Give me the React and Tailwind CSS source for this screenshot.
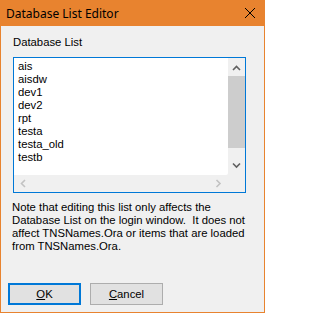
const items = ['ais', 'aisdw', 'dev1', 'dev2', 'rpt', 'testa', 'testa_old', 'testb'];

function Chevron({ dir, className }) {
  const d = {
    up: 'M1 5 L4.5 1.5 L8 5',
    down: 'M1 1.5 L4.5 5 L8 1.5',
    left: 'M5 1 L1.5 4.5 L5 8',
    right: 'M1.5 1 L5 4.5 L1.5 8',
  }[dir];
  const box = dir === 'up' || dir === 'down' ? '0 0 9 7' : '0 0 7 9';
  return (
    <svg viewBox={box} className={className} fill="none" stroke="currentColor" strokeWidth="1.6">
      <path d={d} />
    </svg>
  );
}

export default function App() {
  return (
    <div className="w-[265px] h-[313px] flex flex-col bg-[#f0f0f0] border-x border-b border-[#e8832f] text-black text-[11.3px] leading-[13px]" style={{ fontFamily: '"Liberation Sans", Arial, sans-serif' }}>
      {/* title bar */}
      <div className="h-[26px] shrink-0 bg-[#e8832f] -mx-px flex items-center justify-between pl-[6px] pr-[10px]">
        <span className="text-[12px] font-['Noto_Sans',sans-serif]">Database List Editor</span>
        <svg viewBox="0 0 10 10" className="w-[10px] h-[10px]" stroke="black" strokeWidth="1">
          <path d="M0 0 L10 10 M10 0 L0 10" />
        </svg>
      </div>

      <div className="flex flex-col pl-[12px] pr-[18px]">
        <div className="mt-[10px]">Database List</div>

        {/* list box */}
        <div className="mt-[8px] h-[136px] w-[233px] border border-[#0078d7] bg-[#f0f0f0] grid grid-cols-[1fr_17px] grid-rows-[1fr_17px]">
          <div className="bg-white pt-[2px] pl-[4px] rounded-br-[2px]">
            {items.map(i => (
              <div key={i}>{i}</div>
            ))}
          </div>
          <div className="flex flex-col items-center">
            <Chevron dir="up" className="w-[9px] h-[7px] mt-[7px] text-[#606060]" />
            <div className="w-[17px] h-[72px] mt-[4px] bg-[#cdcdcd]" />
            <div className="flex-1" />
            <Chevron dir="down" className="w-[9px] h-[7px] mb-[6px] text-[#606060]" />
          </div>
          <div className="flex items-center justify-between px-[6px]">
            <Chevron dir="left" className="w-[7px] h-[9px] text-[#c2c2c2]" />
            <Chevron dir="right" className="w-[7px] h-[9px] text-[#c2c2c2]" />
          </div>
          <div />
        </div>

        <p className="mt-[8px] -ml-[1px]">
          Note that editing this list only affects the Database List on the login window.&nbsp; It does not affect TNSNames.Ora or items that are loaded from TNSNames.Ora.
        </p>
      </div>

      <div className="flex gap-[9px] mt-auto mb-[7px] pl-[7px]">
        <button className="w-[73px] h-[22px] bg-[#e1e1e1] border-2 border-[#0078d7]">
          <span className="underline">O</span>K
        </button>
        <button className="w-[73px] h-[22px] bg-[#e1e1e1] border border-[#adadad]">
          <span className="underline">C</span>ancel
        </button>
      </div>
    </div>
  );
}
